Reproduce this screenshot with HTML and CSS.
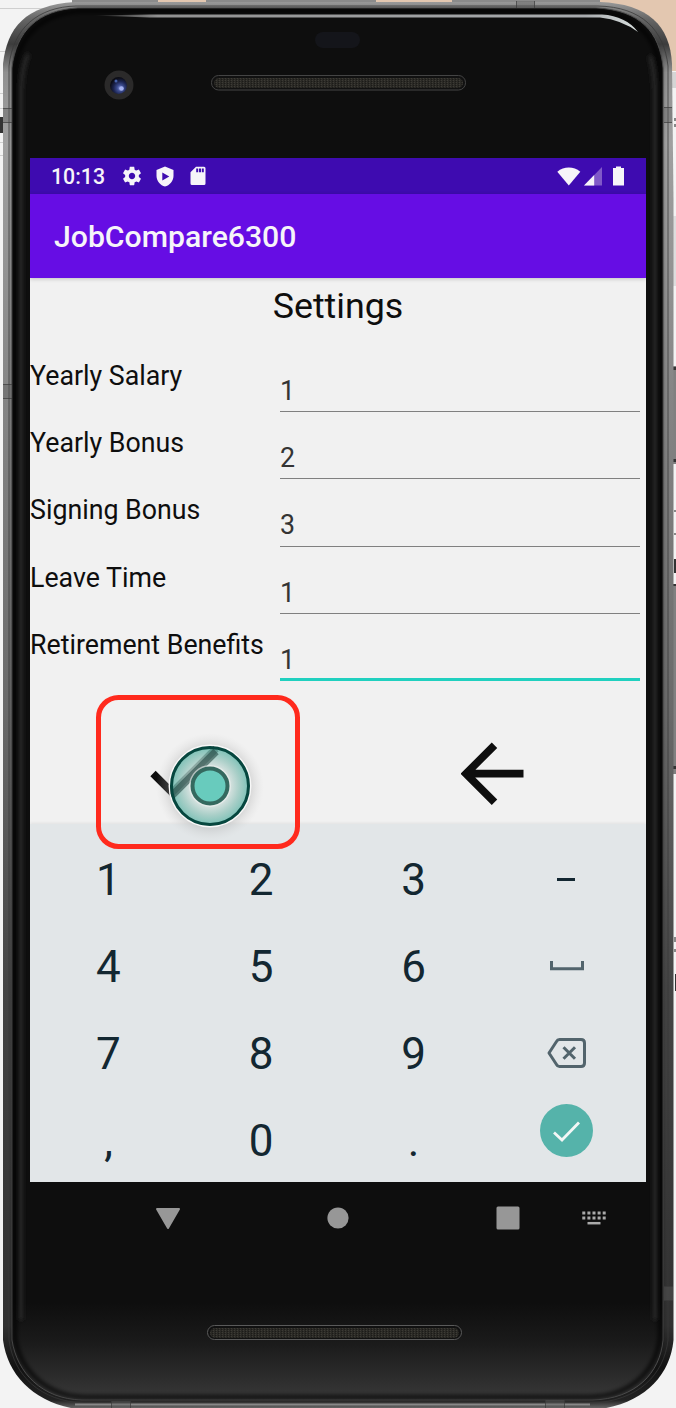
FILE: index.html
```
<!DOCTYPE html>
<html lang="en">
<head>
<meta charset="utf-8">
<title>JobCompare6300</title>
<link rel="stylesheet" href="styles.css">
</head>
<body>
<div class="stage">
  <svg class="device" width="676" height="1408" viewBox="0 0 676 1408" aria-hidden="true">
    <defs>
      <linearGradient id="metal" x1="0" y1="0" x2="0" y2="1">
        <stop offset="0" stop-color="#999"/><stop offset=".012" stop-color="#666"/><stop offset=".03" stop-color="#3c3c3c"/><stop offset=".05" stop-color="#909090"/><stop offset=".1" stop-color="#a0a0a0"/><stop offset=".28" stop-color="#858585"/>
        <stop offset=".5" stop-color="#6a6a6a"/><stop offset=".7" stop-color="#444"/><stop offset=".94" stop-color="#303030"/><stop offset=".97" stop-color="#121212"/><stop offset=".993" stop-color="#222"/><stop offset="1" stop-color="#777"/>
      </linearGradient>
      <linearGradient id="glass" x1="0" y1="0" x2="0" y2="1">
        <stop offset="0" stop-color="#0e0e0e"/><stop offset=".93" stop-color="#0e0e0e"/><stop offset=".96" stop-color="#1b1b1b"/><stop offset="1" stop-color="#383838"/>
      </linearGradient>
      <filter id="soft" x="-5%" y="-5%" width="110%" height="110%"><feGaussianBlur stdDeviation="2"/></filter>
      <linearGradient id="shine" x1="92" y1="0" x2="640" y2="0" gradientUnits="userSpaceOnUse">
        <stop offset="0" stop-color="#999" stop-opacity="0"/><stop offset=".12" stop-color="#909090"/><stop offset=".9" stop-color="#a8abae"/><stop offset="1" stop-color="#dce3e2"/>
      </linearGradient>
      <pattern id="mesh" width="3" height="2" patternUnits="userSpaceOnUse"><rect width="3" height="2" fill="#2a2925"/><rect width="1" height="1" fill="#3d3b35"/><rect x="2" y="1" width="1" height="1" fill="#1c1b18"/></pattern>
      <radialGradient id="lens" cx=".6" cy=".65" r=".6"><stop offset="0" stop-color="#8795d8"/><stop offset=".3" stop-color="#3d4d91"/><stop offset=".65" stop-color="#1c2450"/><stop offset="1" stop-color="#0c0d16"/></radialGradient>
    </defs>
    <rect width="676" height="1408" fill="#f3f3f3"/>
    <path d="M0 8.500h60M0 51.500h16M0 93.500h8M0 108.500h3M0 142.500h3M0 155.500h3" stroke="#cfcfcf"/>
    <path d="M0 117h3v16H0z" fill="#333"/>
    <path d="M72 0h528v3H72z" fill="#8b8b8b"/>
    <path d="M158 0h48v2h-48zM376 0h76v2h-76zM600 0h76v71h-76z" fill="#e3c7b0"/>
    <path d="M672 72h4v16h-4z" fill="#d5d5d5"/>
    <path d="M672 216h4v70h-4z" fill="#ddd"/>
    <path d="M673 366h3v98h-3zM672 584h4v190h-4z" fill="#808080"/>
    <path d="M673 367h3v3h-3zM673 459h3v3h-3zM674 559h2v14h-2zM672 584h4v2h-4zM672 766h4v3h-4zM675 974h1v17h-1z" fill="#333"/>
    <path d="M675 118v3M675 124v3M675 510v2M675 533v2M675 937v5M675 949v3" stroke="#888" stroke-width="2"/>
    <path d="M75 2H600C648 4 670 25 672 64L673.500 200V1340C670 1378 640 1407 590 1410H85C38 1406 8 1378 3 1340V64C7 28 25 5 75 2Z" fill="url(#metal)"/>
    <path d="M76 6H598C642 7 664 30 668 66V1340C664 1375 638 1401 592 1403H84C40 1401 14 1376 9 1340V66C13 28 38 7 76 6Z" fill="none" stroke="#383838" stroke-opacity=".75" stroke-width="1"/>
    <path d="M78 8H596C640 10 660 32 663 68V1340C660 1373 636 1399 592 1400H82C42 1399 17 1373 12 1340V68C16 31 38 10 78 8Z" fill="url(#glass)" stroke="#555"/>
    <path d="M82 11H592C636 13 656 36 660 70V1338C656 1370 632 1396 590 1397H84C46 1396 20 1370 15 1338V70C19 35 42 13 82 11Z" fill="none" stroke="#060606" stroke-width="3" filter="url(#soft)"/>
    <path d="M21 1320V90Q22 68 28 54M655 1320V90Q654 68 650 56" fill="none" stroke="#2a2a2a" stroke-width="4" filter="url(#soft)"/>
    <path d="M92 15.500 L150 14.500 H602 Q626 16 638 32 Q622 20 600 17.500 H150Z" fill="url(#shine)"/>
    <path d="M75 1404.500h515" stroke="#888" stroke-width="2"/>
    <path d="M516 1h19v7h-19zM3 108h9v15H3zM664 107h8v16h-8zM3 384h9v15H3zM664 1286h9v15h-9zM111 1401h20v7h-20zM545 1400h20v8h-20z" fill="#606060" fill-opacity=".4"/>
    <path d="M516.500 1v7M534.500 1v7M3 108.500h9M3 122.500h9M664 107.500h8M664 122.500h8M3 384.500h9M3 398.500h9M664 1286.500h9M664 1300.500h9M111.500 1401v7M130.500 1401v7M545.500 1400v8M564.500 1400v8" stroke="#333" stroke-opacity=".6"/>
    <rect x="315" y="32" width="45" height="16" rx="8" fill="#14151a"/>
    <circle cx="119" cy="85" r="14.500" fill="#2b2a2a"/>
    <circle cx="118.500" cy="85.500" r="8.500" fill="url(#lens)"/>
    <circle cx="116" cy="81" r="1.500" fill="#4863ac"/><circle cx="121.500" cy="88.500" r="2.300" fill="#a4b1f0"/>
    <rect x="211.500" y="75.500" width="254" height="14.500" rx="7" fill="#111" stroke="#444"/>
    <rect x="214" y="78" width="249" height="10" rx="5" fill="url(#mesh)"/>
    <rect x="207.500" y="1325.500" width="254" height="14" rx="7" fill="#111" stroke="#5a5a5a"/>
    <rect x="210" y="1328" width="249" height="10" rx="5" fill="url(#mesh)"/>
  </svg>

  <main class="screen">
    <header class="status">
      <span class="clock">10:13</span>
      <svg class="gear" width="22" height="22" viewBox="0 0 24 24"><path fill="#f6f4f9" d="M19.430 12.980c.04-.32.07-.64.07-.98s-.03-.66-.07-.98l2.110-1.650c.19-.15.24-.42.12-.64l-2-3.460c-.12-.22-.39-.3-.61-.22l-2.490 1c-.52-.4-1.080-.73-1.690-.98l-.38-2.650C14.460 2.180 14.250 2 14 2h-4c-.25 0-.46.18-.49.42l-.38 2.650c-.61.25-1.170.59-1.690.98l-2.490-1c-.23-.09-.49 0-.61.22l-2 3.460c-.13.22-.07.49.12.64l2.110 1.650c-.04.32-.07.65-.07.98s.03.66.07.98l-2.110 1.650c-.19.15-.24.42-.12.64l2 3.460c.12.22.39.3.61.22l2.490-1c.52.4 1.080.73 1.690.98l.38 2.650c.03.24.24.42.49.42h4c.25 0 .46-.18.49-.42l.38-2.650c.61-.25 1.170-.59 1.690-.98l2.490 1c.23.09.49 0 .61-.22l2-3.460c.12-.22.07-.49-.12-.64l-2.110-1.650zM12 15.500c-1.930 0-3.500-1.570-3.500-3.500s1.570-3.500 3.500-3.500 3.500 1.570 3.500 3.500-1.570 3.500-3.500 3.500z"/></svg>
      <svg class="shield" width="18" height="21" viewBox="0 0 18 21"><path fill="#f6f4f9" fill-rule="evenodd" d="M9 .5 17.500 4v6c0 5-4 9.500-8.500 10.500C4.500 19.500.5 15 .5 10V4ZM6.300 6.500v8l7-4Z"/></svg>
      <svg class="card" width="16" height="20" viewBox="0 0 16 20"><path fill="#f6f4f9" fill-rule="evenodd" d="M6 .8H14Q15.500.8 15.500 2.300V17.500Q15.500 19 14 19H2Q.5 19 .5 17.500V6.300ZM6.200 2.500v3.700h2V2.500zM9 2.500v3.700h2V2.500zM11.800 2.500v3.700h2V2.500z"/></svg>
      <span class="fill"></span>
      <svg class="wifi" width="24" height="19" viewBox="0 0 24 19"><path fill="#f6f4f9" d="M.3 4.700Q5.500.5 11.800.5T23.300 4.700L11.800 18.500Z"/></svg>
      <svg class="signal" width="18" height="19" viewBox="0 0 18 19"><path fill="#8059c8" d="M18 0v18.500H0Z"/><path fill="#f6f4f9" d="M10.200 8v10.500H0Z"/></svg>
      <svg class="battery" width="11" height="20" viewBox="0 0 11 20"><path fill="#f6f4f9" d="M3 .5h5V2h3v17.500H0V2h3z"/></svg>
    </header>
    <div class="appbar">JobCompare6300</div>
    <section class="content">
      <h1 class="title">Settings</h1>
      <div class="form">
        <div class="row"><span class="label">Yearly Salary</span><span class="field">1</span></div>
        <div class="row"><span class="label">Yearly Bonus</span><span class="field">2</span></div>
        <div class="row"><span class="label">Signing Bonus</span><span class="field">3</span></div>
        <div class="row"><span class="label">Leave Time</span><span class="field">1</span></div>
        <div class="row"><span class="label">Retirement Benefits</span><span class="field focused">1</span></div>
      </div>
      <div class="actions">
        <svg class="check" width="72" height="54" viewBox="0 0 72 54"><path fill="none" stroke="#0e0e0e" stroke-width="7.500" d="M3 27.500 22 46.500 66 2.500"/></svg>
        <svg class="back" width="64" height="64" viewBox="0 0 64 64"><path fill="none" stroke="#0e0e0e" stroke-width="7.700" d="M33.500 3.200 5 31.700 33.500 60.200M5 31.700H62.500"/></svg>
      </div>
    </section>
    <section class="keyboard">
      <span class="key">1</span><span class="key">2</span><span class="key">3</span><span class="key"><i class="minus"></i></span>
      <span class="key">4</span><span class="key">5</span><span class="key">6</span>
      <span class="key icon"><svg width="34" height="10" viewBox="0 0 34 10"><path fill="none" stroke="#52646c" stroke-width="3" d="M1.500 0V7.700H32.500V0"/></svg></span>
      <span class="key">7</span><span class="key">8</span><span class="key">9</span>
      <span class="key icon"><svg width="40" height="32" viewBox="0 0 40 32"><path fill="none" stroke="#52646c" stroke-width="3" stroke-linejoin="round" d="M12.500 2.500H34Q37.500 2.500 37.500 6V26Q37.500 29.500 34 29.500H12.500Q10.500 29.500 9.500 27.500L2 16 9.500 4.500Q10.500 2.500 12.500 2.500ZM16.500 10.300 28 21.800M28 10.300 16.500 21.800"/></svg></span>
      <span class="key">,</span><span class="key">0</span><span class="key">.</span>
      <span class="key enter"><svg width="53" height="53" viewBox="0 0 53 53"><circle cx="26.500" cy="26.500" r="26.500" fill="#55b3aa"/><path fill="none" stroke="#f3f7f6" stroke-width="2.800" d="M14 28.500 22 36 39 18.500"/></svg></span>
    </section>
    <svg class="pointer" width="220" height="170" viewBox="0 0 220 170" aria-hidden="true">
      <defs>
        <radialGradient id="halo"><stop offset=".72" stop-color="#999" stop-opacity=".34"/><stop offset="1" stop-color="#ccc" stop-opacity="0"/></radialGradient>
        <radialGradient id="ring"><stop offset=".46" stop-color="#e5eeec" stop-opacity=".65"/><stop offset=".75" stop-color="#8fcabf" stop-opacity=".64"/><stop offset="1" stop-color="#4cb5a5" stop-opacity=".66"/></radialGradient>
        <clipPath id="disc"><circle cx="120" cy="101" r="39"/></clipPath>
      </defs>
      <circle cx="120" cy="102" r="54" fill="url(#halo)"/>
      <circle cx="120" cy="101" r="39" fill="#f1f1f1" fill-opacity=".15"/>
      <circle cx="120" cy="101" r="39" fill="url(#ring)"/>
      <path d="M63 91.500 82 110.500 126 66.500" fill="none" stroke="#244a45" stroke-opacity=".6" stroke-width="7.500" clip-path="url(#disc)"/>
      <circle cx="120" cy="101" r="40.700" fill="none" stroke="#f8f8f8" stroke-width="1.500"/>
      <circle cx="120" cy="101" r="38.500" fill="none" stroke="#06473f" stroke-width="3"/>
      <circle cx="120" cy="101" r="20" fill="none" stroke="#edf1f0" stroke-opacity=".6" stroke-width="2"/>
      <circle cx="120" cy="101" r="17.500" fill="#68cbbd" stroke="#34695f" stroke-width="4"/>
      <rect x="8.500" y="12.500" width="199" height="149" rx="20" fill="none" stroke="#ff2a1d" stroke-width="5"/>
    </svg>
  </main>

  <nav class="navbar">
    <svg width="26" height="24" viewBox="0 0 26 24"><path fill="#979797" stroke="#979797" stroke-width="2" stroke-linejoin="round" d="M2 3H24L13 22Z"/></svg>
    <svg width="22" height="22" viewBox="0 0 22 22"><circle cx="11" cy="11" r="10.600" fill="#979797"/></svg>
    <svg width="24" height="24" viewBox="0 0 24 24"><rect x=".5" y=".5" width="23" height="23" rx="1.500" fill="#979797"/></svg>
    <svg class="ime" width="24" height="14" viewBox="0 0 24 14"><path stroke="#aaa" stroke-width="3" stroke-dasharray="3 2.100" d="M.3 2H24M.3 7H24"/><path stroke="#aaa" stroke-width="2.500" d="M5.500 12.200H18.500"/></svg>
  </nav>
</div>
</body>
</html>
```
FILE: styles.css
```
body { margin: 0; font-family: Roboto, "Liberation Sans", sans-serif; color: #0e0e0e; }
.stage { position: relative; box-sizing: border-box; width: 676px; height: 1408px; padding: 158px 30px 0; overflow: hidden; }
.device { position: absolute; inset: 0; }
.screen { position: relative; display: flex; flex-direction: column; width: 616px; height: 1024px; background: #f1f1f1; overflow: hidden; }
.status { display: flex; align-items: center; box-sizing: border-box; height: 36px; flex: none; padding: 0 22px 0 21px; background: #3e0bb0; color: #f6f4f9; }
.clock { width: 69.5px; font-size: 21.3px; font-weight: 500; line-height: 38px; padding-top: 2px; }
.shield { margin-left: 13px; }
.card { margin-left: 16px; }
.fill { flex: 1; }
.signal { margin-left: 3px; }
.battery { margin-left: 11px; }
.appbar { flex: none; height: 84px; padding-left: 24px; background: #660de4; color: #f6f4f9; font-size: 30.2px; font-weight: 500; line-height: 86px; box-shadow: 0 1px 4px #0003; z-index: 1; }
.content { flex: none; height: 546px; }
.title { margin: 0; padding-top: 6px; height: 66px; font-size: 35.8px; font-weight: 400; line-height: 44px; text-align: center; }
.form { display: grid; grid-auto-rows: 67.4px; }
.row { display: grid; grid-template-columns: 250px 360px; }
.label { padding-top: 10.7px; font-size: 26.75px; line-height: 31px; white-space: nowrap; }
.field { box-sizing: border-box; height: 61.8px; padding-top: 24.6px; border-bottom: 1.5px solid #808080; font-size: 26.75px; line-height: 32px; color: #343434; }
.focused { border-bottom: 3px solid #20d0bf; }
.actions { display: flex; align-items: flex-start; padding: 55px 0 0 120px; }
.check { margin-top: 4px; }
.back { margin-left: 239px; }
.keyboard { display: grid; flex: none; grid-template-columns: repeat(4, 152.6px); grid-auto-rows: 86.8px; box-sizing: border-box; height: 360px; padding: 13px 0 0 2.2px; background: #e2e6e8; box-shadow: 0 -1px 3px #0001; }
.key { display: flex; align-items: center; justify-content: center; font-size: 44px; line-height: 52px; color: #132731; }
.minus { width: 18px; height: 3px; margin-bottom: 1px; background: #132731; }
.icon { padding: 0 0 2px 1px; }
.enter { padding-bottom: 20px; }
.pointer { position: absolute; left: 60px; top: 527px; }
.navbar { position: relative; display: grid; grid-template-columns: 170px 170px 170px 1fr; align-items: center; justify-items: center; height: 72px; margin-left: 52.5px; }
.navbar .ime { justify-self: start; margin-left: -10.5px; }
```
